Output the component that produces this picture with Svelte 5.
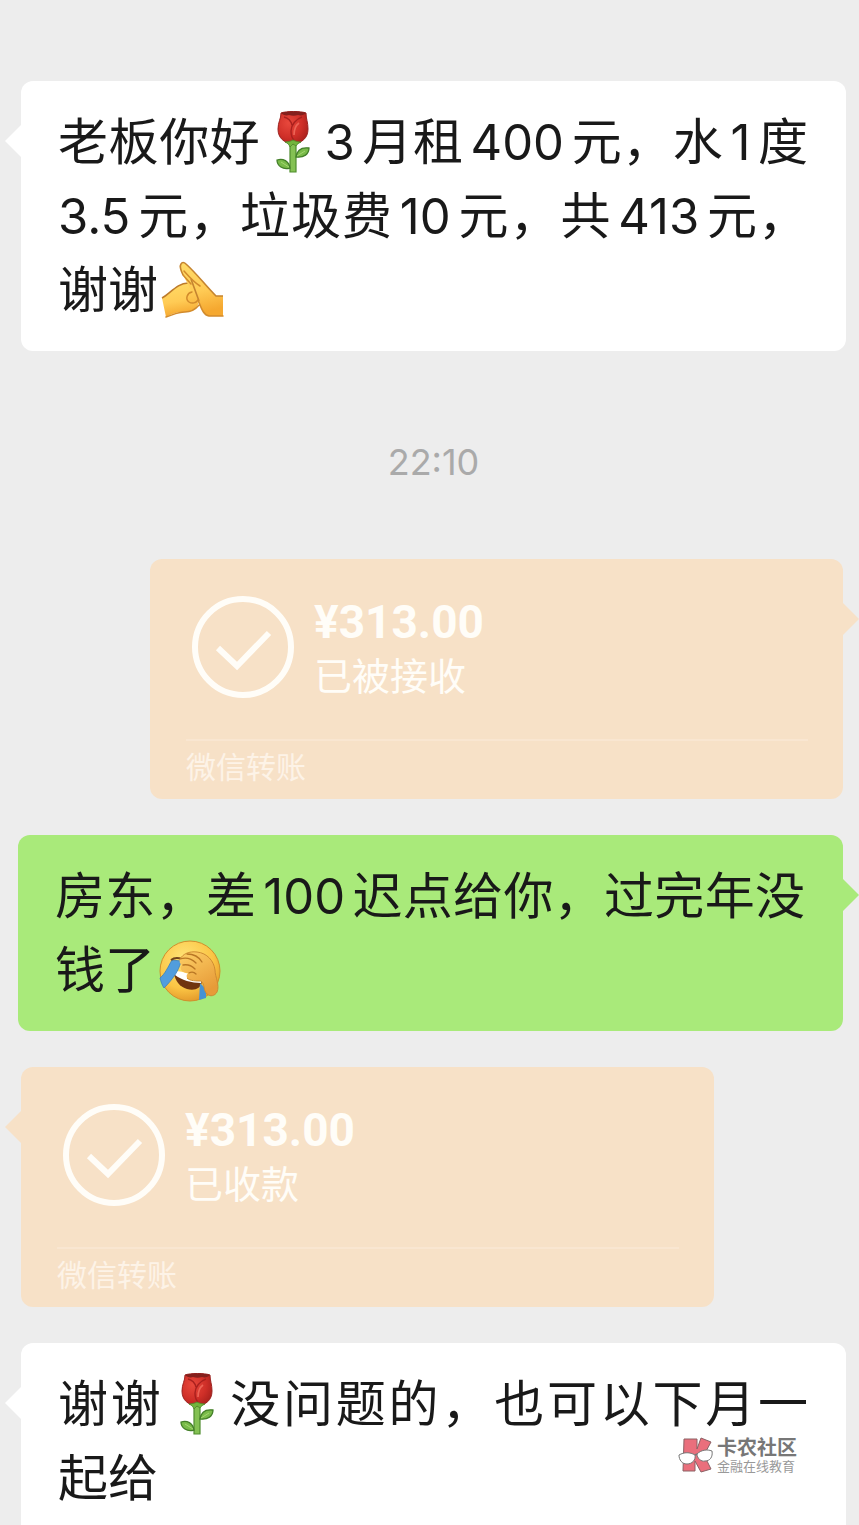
<script>
	const items = [
		{
			kind: 'text',
			side: 'left',
			lines: ['老板你好🌹3月租400元，水1度', '3.5元，垃圾费10元，共413元，', '谢谢🙏']
		},
		{ kind: 'time', text: '22:10' },
		{ kind: 'transfer', side: 'right', amount: '¥313.00', status: '已被接收' },
		{ kind: 'text', side: 'right', lines: ['房东，差100迟点给你，过完年没', '钱了🤦'] },
		{ kind: 'transfer', side: 'left', amount: '¥313.00', status: '已收款' },
		{ kind: 'text', side: 'left', lines: ['谢谢🌹没问题的，也可以下月一', '起给'] }
	];

	// split a line into plain text, numbers and emoji
	function parts(line) {
		return line.split(/([\d.]+|🌹|🙏|🤦)/u).filter(Boolean);
	}
</script>

{#snippet rose()}
	<svg class="emoji" viewBox="0 0 64 64" role="img" aria-label="玫瑰">
		<defs>
			<radialGradient id="petal" cx="35%" cy="35%" r="75%">
				<stop offset="0" stop-color="#e8483c" />
				<stop offset="0.6" stop-color="#cf2f28" />
				<stop offset="1" stop-color="#a8201c" />
			</radialGradient>
		</defs>
		<path d="M30 29h6v32h-6z" fill="#84c153" stroke="#4f8d2d" stroke-width="1.2" />
		<path d="M36 46c1-7 6-10 13-9 0 6-5 10-13 9z" fill="#79bb49" stroke="#437f29" stroke-width="1.3" />
		<path d="M30 57c-1-7-7-10-13-8 0 6 6 10 13 8z" fill="#79bb49" stroke="#437f29" stroke-width="1.3" />
		<path d="M37 45l8-5M29 56l-8-5" stroke="#a4d672" stroke-width="1" />
		<path d="M21 2c5-2 20-2 25 0 0 6 2 9 2 16 0 9-6 14-15 15-9-1-15-6-15-15 0-7 3-10 3-16z" fill="url(#petal)" stroke="#9b2220" stroke-width="1" />
		<path d="M21 2c5-2 20-2 25 0-2 2-5 3-8 2-3 1-6 1-9 0-3 1-6 0-8-2z" fill="#84201d" />
		<path d="M42 6c-6 2-11 8-11 14 0 4 1 7 3 9M24 6c4 1 7 4 8 8" fill="none" stroke="#a9201e" stroke-width="1.4" />
		<path d="M39 12c-4 3-5 8-5 12" fill="none" stroke="#ed6456" stroke-width="1.6" />
		<path d="M25 31c3 0 6-1 8-2 2 1 5 2 8 2-2 1-4 2-5 4l-3-2-3 3c-1-3-3-4-5-5z" fill="#72b53d" stroke="#4c8a2a" stroke-width="0.8" />
	</svg>
{/snippet}

{#snippet hands()}
	<svg class="emoji wide" viewBox="0 0 64 64" role="img" aria-label="合十">
		<defs>
			<linearGradient id="skin" x1="0" y1="0" x2="0.2" y2="1">
				<stop offset="0" stop-color="#ffdc68" />
				<stop offset="0.6" stop-color="#ffcb55" />
				<stop offset="1" stop-color="#f5a830" />
			</linearGradient>
		</defs>
		<path d="M1 39C9 35 16 24 27 24c9 0 14 12 11 19-3 9-9 10-14 10-9 0-13 2-19 5z" fill="url(#skin)" />
		<path d="M1 39C9 35 16 24 27 24" fill="none" stroke="#bd7b2b" stroke-width="1.6" />
		<path d="M20 5c-2 3 0 7 2 11l9 17c-4 1-7 6-3 10 3 2 7 1 9-2 3 6 5 15 11 16h14V37h-7C45 27 36 15 25 5c-2-2-4-2-5 0z" fill="url(#skin)" />
		<path d="M38 42l-8-22M22 16c-2-4-4-8-2-11 1-2 3-2 5 0 11 10 20 22 30 32h7" fill="none" stroke="#c58430" stroke-width="1.6" stroke-linejoin="round" />
		<path d="M22 16l8 9M23 12c7 8 11 12 16 15M31 33c-5 1-7 7-3 10 3 2 7 1 9-2 3 7 5 15 11 16h14M5 58c7-2 11-5 19-5 6 0 10-2 14-7" fill="none" stroke="#d28b2c" stroke-width="1.5" stroke-linecap="round" />
	</svg>
{/snippet}

{#snippet facepalm()}
	<svg class="emoji wide" viewBox="0 0 64 64" role="img" aria-label="捂脸">
		<defs>
			<radialGradient id="face" cx="40%" cy="30%" r="75%">
				<stop offset="0" stop-color="#ffe478" />
				<stop offset="0.65" stop-color="#fbc544" />
				<stop offset="1" stop-color="#e09428" />
			</radialGradient>
			<linearGradient id="palm" x1="0" y1="0" x2="0.5" y2="1">
				<stop offset="0" stop-color="#fdd067" />
				<stop offset="1" stop-color="#e79b38" />
			</linearGradient>
		</defs>
		<circle cx="32" cy="32" r="30" fill="url(#face)" stroke="#d08f2c" stroke-width="1" />
		<path d="M16 34l28 8c-1 8-8 10-15 8-7-2-12-8-13-16z" fill="#71340f" />
		<path d="M17 32c8 0 20 5 27 9l-1 3c-9 0-20-3-26-8z" fill="#fff" />
		<path d="M14 21l9 1c-2 10-9 19-17 27-2-3-3-6-4-10 5-4 8-11 12-18z" fill="#519ddd" stroke="#397fbd" stroke-width="0.8" />
		<path d="M42 44l6 6v9l-7 2z" fill="#4692d5" />
		<path d="M13 21c4-3 8-2 11-1" fill="none" stroke="#71431b" stroke-width="2" />
		<path d="M22 20c3-5 9-8 17-7 10 1 17 9 18 18 0 7 5 15 2 22-2 4-7 5-10 2-4-4-2-10-6-13-5 0-11 0-14-3-1-3 0-4 2-5-5 0-8-2-8-4-1-2 0-3 1-4-2-1-3-3-2-6z" fill="url(#palm)" />
		<path d="M22 20c3-5 9-8 17-7 10 1 17 9 18 18 0 7 5 15 2 22-2 4-7 5-10 2-4-4-2-10-6-13-5 0-11 0-14-3" fill="none" stroke="#ce8b32" stroke-width="1" />
		<path d="M22 20c6-2 12 0 16 4M25 26c5-1 9 1 12 4M31 34c2-1 5-1 7 1M29 15c7 0 12 3 15 8" fill="none" stroke="#b97725" stroke-width="1.3" stroke-linecap="round" />
	</svg>
{/snippet}

<main class="chat" lang="zh-CN">
	{#each items as item}
		{#if item.kind === 'time'}
			<time class="time">{item.text}</time>
		{:else if item.kind === 'text'}
			<div class="bubble message {item.side}">
				{#each item.lines as line}
					<p>{#each parts(line) as part, i}{#if part === '🌹'}{@render rose()}{:else if part === '🙏'}{@render hands()}{:else if part === '🤦'}{@render facepalm()}{:else if /\d/.test(part)}<span class="num" class:lead={i === 0}>{part}</span>{:else}{part}{/if}{/each}</p>
				{/each}
			</div>
		{:else}
			<div class="bubble transfer {item.side}">
				<div class="summary">
					<svg class="check" viewBox="0 0 104 104" aria-hidden="true">
						<circle cx="52" cy="52" r="48" />
						<path d="M27 53l19 18 32-33" />
					</svg>
					<div>
						<div class="amount">{item.amount}</div>
						<div class="status">{item.status}</div>
					</div>
				</div>
				<div class="source">微信转账</div>
			</div>
		{/if}
	{/each}

	<aside class="watermark">
		<svg viewBox="0 0 36 36" aria-hidden="true">
			<path d="M6 2h13v10l4-11 10 4-7 13 7 14-10 3-6-11v10H5z" fill="#ea6f7c" stroke="#8b6265" stroke-width="1" />
			<path d="M1 18c5-3 11-3 16 0 1 5-3 9-8 9s-8-4-8-9zM19 17c4-4 10-5 15-3 1 6-2 10-7 10-4 1-8-3-8-7z" fill="#fff" stroke="#777" stroke-width="1" />
			<path d="M17 18l2-1" stroke="#777" stroke-width="1.5" />
		</svg>
		<div>
			<div class="name">卡农社区</div>
			<div class="tagline">金融在线教育</div>
		</div>
	</aside>
</main>

<style>
	:global(body) { margin: 0; background: #ededed; }
	.chat {
		display: flex;
		flex-direction: column;
		gap: 36px;
		box-sizing: border-box;
		height: 100vh;
		padding: 81px 13px 0 21px;
		overflow: hidden;
		font-family: Inter, "Noto Sans CJK SC", sans-serif;
	}
	.time {
		align-self: center;
		margin: 44px 0 30px;
		color: #aaa;
		font-size: 36px;
		line-height: 62px;
	}
	.bubble { position: relative; flex-shrink: 0; border-radius: 12px; }
	.bubble::before {
		content: '';
		position: absolute;
		top: 44px;
		width: 16px;
		height: 32px;
		background: inherit;
	}
	.left::before { right: 100%; clip-path: polygon(0 50%, 100% 0, 100% 100%); }
	.right::before { left: 100%; clip-path: polygon(100% 50%, 0 0, 0 100%); }
	.message { padding: 24px 38px 24px 37px; background: #fff; }
	.message.right { margin: 0 3px 0 -3px; background: #a9ea7a; }
	.message p {
		margin: 0;
		color: #191919;
		font-size: 50px;
		line-height: 74px;
		white-space: nowrap;
		text-align-last: justify;
	}
	.message p:last-child { text-align-last: start; }
	.num { margin: 0 7px; font-size: 49px; line-height: 1; }
	.num.lead { margin-left: 0; }
	.emoji { width: 64px; height: 64px; vertical-align: -15px; }
	.emoji.wide { margin-left: 3px; }
	.emoji + .num { margin-left: 0; }
	.transfer {
		box-sizing: border-box;
		width: 84%;
		padding: 36px 35px 11px 36px;
		background: #f7e1c7;
		color: #fffdf8;
	}
	.transfer.right { align-self: flex-end; margin-right: 3px; }
	.summary { display: flex; gap: 19px; padding: 0 5px 36px; }
	.check {
		width: 104px;
		height: 104px;
		fill: none;
		stroke: #fffdf8;
		stroke-width: 6;
	}
	.amount { font-family: Roboto, sans-serif; font-size: 46px; font-weight: 700; line-height: 54px; }
	.status { font-size: 38px; line-height: 54px; }
	.source {
		border-top: 2px solid #f9e6d1;
		padding-top: 5px;
		color: #fdf3e7;
		font-size: 30px;
		line-height: 42px;
	}
	.watermark {
		position: absolute;
		right: 62px;
		top: 1437px;
		display: flex;
		gap: 3px;
		color: #777;
	}
	.watermark svg { width: 36px; height: 36px; }
	.name { font-size: 20px; font-weight: 700; line-height: 22px; }
	.tagline { color: #999; font-size: 13px; line-height: 14px; }
</style>
